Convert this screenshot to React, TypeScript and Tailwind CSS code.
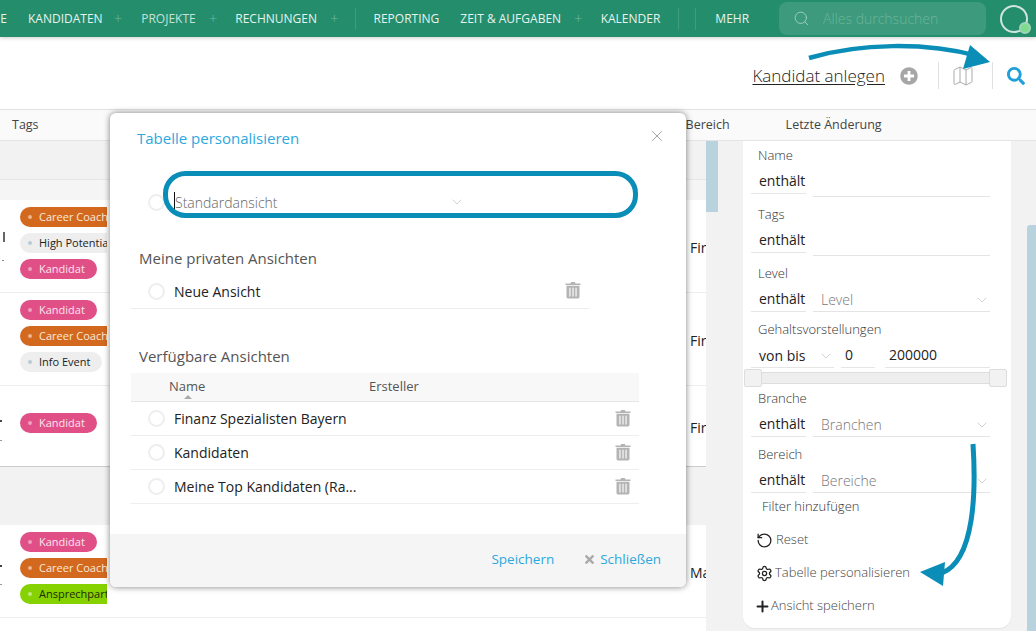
import React from "react";
import { FaPlusCircle, FaSearch, FaTimes } from "react-icons/fa";
import { Map, Plus, RotateCcw, Search, Settings, X, ChevronDown } from "lucide-react";

const NavPlus = ({ className = "" }: { className?: string }) => (
  <span className={`text-[#6fb89f] text-[15px] font-light leading-none ${className}`}>+</span>
);

const Trash = () => (
  <svg width="16" height="18" viewBox="0 0 16 18" fill="#b4b4b4" className="block">
    <path d="M0.5 2.6h5l.6-1.6h3.8l.6 1.6h5.000v1.300h-15.000z" />
    <path d="M1.500 4.800h13v11.200a1.400 1.400 0 0 1-1.400 1.400h-10.200a1.400 1.400 0 0 1-1.400-1.400z" />
    <path d="M4.400 6.800h1.100v8.600h-1.100zM7.450 6.800h1.100v8.600h-1.100zM10.500 6.800h1.100v8.600h-1.100z" fill="#fff" />
  </svg>
);

const Radio = () => <span className="block w-[17px] h-[17px] rounded-full border-2 border-[#eeeeee] bg-white shrink-0" />;

const Tag = ({ label, color }: { label: string; color: "orange" | "pink" | "gray" | "lime" }) => {
  const styles = {
    orange: "bg-[#d2691e] text-[#fbe9d9]",
    pink: "bg-[#e04f86] text-[#fde4ee]",
    gray: "bg-[#eeeeee] text-[#222222]",
    lime: "bg-[#86d100] text-[#1d2b00]",
  };
  const dots = {
    orange: "bg-[#eeb48c]",
    pink: "bg-[#eea0c0]",
    gray: "bg-[#b8ccd6]",
    lime: "bg-[#c0e880]",
  };
  return (
    <div className={`h-5 rounded-full flex items-center pl-[8px] pr-3 w-fit whitespace-nowrap text-[11px] ${styles[color]}`}>
      <span className={`w-[4px] h-[4px] rounded-full mr-[7px] shrink-0 ${dots[color]}`} />
      {label}
    </div>
  );
};

const TableRow = ({
  tags,
  cell,
  h,
  pt = "pt-[7px]",
  last,
  children,
}: {
  tags: React.ReactNode;
  cell: string;
  h: string;
  pt?: string;
  last?: boolean;
  children?: React.ReactNode;
}) => (
  <div className={`${h} flex relative border-b ${last ? "border-[#cccccc]" : "border-[#eeeeee]"}`}>
    {children}
    <div className={`w-[107px] pl-5 ${pt} flex flex-col gap-[6px] overflow-hidden shrink-0`}>{tags}</div>
    <div className="ml-[583px] self-center mt-[2px] w-4 overflow-hidden text-[14px] text-[#222222] whitespace-nowrap">{cell}</div>
  </div>
);

const FilterRow = ({ label, value, low, mb = "mb-[8px]" }: { label: string; value?: string; low?: boolean; mb?: string }) => (
  <div className={mb}>
    <div className="pl-[15px] text-[13px] font-light text-[#333333] leading-[18px]">{label}</div>
    <div className={`flex items-start mt-[6px] ${low ? "h-[27px]" : "h-[24px]"}`}>
      <div className="w-[55px] ml-[8px] border-b border-[#e6e6e6] h-[24px] pl-[8px] text-[14px] leading-[22px] text-[#222222]">enthält</div>
      <div className={`w-[177px] ml-[7px] border-b border-[#e4e4e4] flex items-center justify-between pl-2 text-[14px] font-light text-[#777777] ${low ? "h-[27px]" : "h-[24px]"}`}>
        {value}
        {value && <ChevronDown size={16} strokeWidth={0.8} className="text-[#aaaaaa]" />}
      </div>
    </div>
  </div>
);

const ViewRow = ({ name }: { name: string }) => (
  <div className="h-[34px] flex items-center border-b border-[#eeeeee]">
    <div className="ml-[17px] mr-[9px]">
      <Radio />
    </div>
    <span className="text-[14px] text-[#222222] flex-1">{name}</span>
    <div className="mr-2 mb-[2px]">
      <Trash />
    </div>
  </div>
);

export default function App() {
  return (
    <div className="w-[1036px] h-[631px] overflow-hidden relative bg-white" style={{ fontFamily: '"Open Sans", sans-serif' }}>
      {/* top nav */}
      <nav className="h-[37px] bg-[#248d6c] flex items-center text-[12px] text-[#e6f3ee] whitespace-nowrap relative z-10 shadow-[0_1px_4px_rgba(0,0,0,0.2)]">
        <span className="w-[7px] overflow-hidden flex justify-end">E</span>
        <span className="ml-[21px]">KANDIDATEN</span>
        <NavPlus className="ml-[11px]" />
        <span className="ml-[19px] text-[#c5e2d8]">PROJEKTE</span>
        <NavPlus className="ml-[13px]" />
        <span className="ml-[18px]">RECHNUNGEN</span>
        <NavPlus className="ml-[13px]" />
        <span className="ml-[16px] w-px h-[22px] bg-[#3f9c7e]" />
        <span className="ml-[18px]">REPORTING</span>
        <span className="ml-[21px]">ZEIT &amp; AUFGABEN</span>
        <NavPlus className="ml-[13px]" />
        <span className="ml-[18px]">KALENDER</span>
        <span className="ml-[18px] w-px h-[22px] bg-[#3f9c7e]" />
        <span className="ml-[16px] w-px h-[22px] bg-[#3f9c7e]" />
        <span className="ml-[19px]">MEHR</span>
        <div className="ml-[30px] w-[207px] h-[33px] rounded-lg bg-[#3d9a7c] flex items-center pl-[14px]">
          <Search size={17} strokeWidth={1.2} className="text-[#a9d4c4]" />
          <span className="ml-[13px] text-[14px] font-light text-[#6cb49b]">Alles durchsuchen</span>
        </div>
        <div className="ml-[14px] w-[28px] h-[28px] rounded-full border-2 border-[#cfe4dc] relative">
          <span className="absolute right-[-5px] bottom-[-3px] w-3 h-3 rounded-full bg-[#7fdc8c] border-2 border-[#9fd4b8]" />
        </div>
      </nav>

      {/* page actions */}
      <div className="h-[73px] pt-[5px] flex items-center justify-end border-b border-[#e2e2e2]">
        <span className="text-[17px] text-[#222222] underline underline-offset-2 font-light">Kandidat anlegen</span>
        <FaPlusCircle size={18} className="ml-[15px] text-[#a6a6a6]" />
        <span className="ml-[20px] w-px h-[27px] bg-[#e0e0e0]" />
        <Map size={24} strokeWidth={1} className="ml-[12px] text-[#aaaaaa]" />
        <span className="ml-[17px] w-px h-[27px] bg-[#e0e0e0]" />
        <FaSearch size={18} className="ml-[14px] mr-[11px] text-[#1f9fdc]" />
      </div>

      {/* table header */}
      <div className="h-[31px] flex items-center bg-[#fafafa] border-b border-[#e4e4e4] text-[12.5px] text-[#444444]">
        <span className="ml-3">Tags</span>
        <span className="ml-[647px]">Bereich</span>
        <span className="ml-[56px]">Letzte Änderung</span>
      </div>

      <div className="flex h-[490px]">
        {/* table */}
        <div className="w-[706px] shrink-0">
          <div className="h-[39px] bg-[#f2f2f2] border-b border-[#e6e6e6]" />
          <div className="h-[20px] bg-[#f5f5f5]" />
          <TableRow
            h="h-[93px]"
            cell="Fir"
            tags={
              <>
                <Tag label="Career Coach" color="orange" />
                <Tag label="High Potential" color="gray" />
                <Tag label="Kandidat" color="pink" />
              </>
            }
          >
            <span className="absolute left-[3px] top-[32px] w-[2px] h-[10px] bg-[#666666]" />
            <span className="absolute left-[2px] top-[60px] w-[2px] h-px bg-[#888888]" />
          </TableRow>
          <TableRow
            h="h-[93px]"
            cell="Fir"
            tags={
              <>
                <Tag label="Kandidat" color="pink" />
                <Tag label="Career Coach" color="orange" />
                <Tag label="Info Event" color="gray" />
              </>
            }
          />
          <TableRow h="h-[81px]" cell="Fir" pt="pt-[27px]" last tags={<Tag label="Kandidat" color="pink" />}>
            <span className="absolute left-0 top-[34px] w-[2px] h-[2px] bg-[#444444]" />
            <span className="absolute left-0 top-[54px] w-[2px] h-px bg-[#999999]" />
          </TableRow>
          <div className="h-[58px] bg-[#f2f2f2]" />
          <TableRow
            h="h-[93px]"
            cell="Ma"
            tags={
              <>
                <Tag label="Kandidat" color="pink" />
                <Tag label="Career Coach" color="orange" />
                <Tag label="Ansprechpartner" color="lime" />
              </>
            }
          >
            <span className="absolute left-0 top-[40px] w-[2px] h-[2px] bg-[#444444]" />
            <span className="absolute left-0 top-[59px] w-[2px] h-px bg-[#999999]" />
          </TableRow>
        </div>

        {/* filter side */}
        <div className="flex-1 bg-[#f2f2f2] flex relative">
          <div className="w-3 h-[71px] bg-[#b9d3de]" />
          <div className="w-[268px] h-[487px] ml-[25px] bg-white rounded-b-[12px] shadow-[0_1px_1px_rgba(0,0,0,0.06)] pt-[5px]">
            <FilterRow label="Name" low />
            <FilterRow label="Tags" low />
            <FilterRow label="Level" value="Level" />
            <div className="pl-[15px] text-[13px] font-light text-[#333333] leading-[18px]">Gehaltsvorstellungen</div>
            <div className="flex mt-[6px] h-[24px] text-[14px] text-[#222222] leading-[22px]">
              <div className="w-[83px] ml-[8px] border-b border-[#e6e6e6] pl-2 flex justify-between items-center">
                von bis
                <ChevronDown size={16} strokeWidth={0.8} className="text-[#aaaaaa]" />
              </div>
              <div className="w-[34px] ml-[7px] border-b border-[#e6e6e6] pl-1">0</div>
              <div className="w-[105px] ml-[10px] border-b border-[#e6e6e6] pl-1">200000</div>
            </div>
            <div className="relative ml-[1px] w-[263px] h-[18px] mt-[1px] mb-[2px] flex items-center">
              <div className="w-full h-[12px] bg-[#eeeeee] border border-[#dddddd]" />
              <span className="absolute left-0 top-0 w-[18px] h-[18px] bg-[#f2f2f2] border border-[#dddddd] rounded-[2px]" />
              <span className="absolute right-0 top-0 w-[18px] h-[18px] bg-[#f2f2f2] border border-[#dddddd] rounded-[2px]" />
            </div>
            <FilterRow label="Branche" value="Branchen" />
            <FilterRow label="Bereich" value="Bereiche" mb="mb-0" />
            <div className="pl-[19px] mt-[4px] text-[13px] font-light text-[#333333] leading-[18px]">Filter hinzufügen</div>
            <div className="flex items-center mt-[16px] pl-[13px] h-[18px] text-[13px] text-[#444444] font-light">
              <RotateCcw size={17} strokeWidth={1.8} className="text-[#222222] mr-[3px]" />
              Reset
            </div>
            <div className="flex items-center mt-[15px] pl-[13px] h-[18px] text-[13px] text-[#444444] font-light">
              <Settings size={17} strokeWidth={1.8} className="text-[#222222] mr-[2px]" />
              Tabelle personalisieren
            </div>
            <div className="flex items-center mt-[15px] pl-[11px] h-[18px] text-[13px] text-[#444444] font-light">
              <Plus size={17} strokeWidth={2.8} className="text-[#222222]" />
              Ansicht speichern
            </div>
          </div>
          <div className="absolute right-0 top-[84px] w-[9px] h-[406px] bg-[#b9d3de] rounded-tl-[3px]" />
        </div>
      </div>

      {/* modal */}
      <div className="absolute left-[110px] top-[113px] w-[576px] h-[474px] bg-white rounded-[6px] shadow-[0_0_6px_rgba(0,0,0,0.5)] z-20 flex flex-col overflow-hidden">
        <div className="flex items-start justify-between pl-[27px] pr-[20px] pt-[14px] text-[15px] leading-[22px] text-[#2ba9dd]">
          <span>Tabelle personalisieren</span>
          <X size={18} strokeWidth={1} className="text-[#888888]" />
        </div>
        <div className="flex items-center ml-[38px] mt-[42px] h-[22px]">
          <Radio />
          <span className="ml-[9px] w-[291px] flex justify-between items-center text-[14px] font-light text-[#666666]">
            <span className="border-l border-[#111111]">Standardansicht</span>
            <ChevronDown size={16} strokeWidth={0.8} className="text-[#aaaaaa]" />
          </span>
        </div>
        <div className="ml-[29px] mt-[34px] text-[15px] leading-[22px] text-[#555555]">Meine privaten Ansichten</div>
        <div className="ml-[21px] w-[458px] h-[37px] mt-[3px] pt-[2px] flex items-center border-b border-[#eeeeee]">
          <div className="ml-[17px] mr-[9px]">
            <Radio />
          </div>
          <span className="text-[14px] text-[#222222] flex-1">Neue Ansicht</span>
          <div className="mr-2 mb-[2px]">
            <Trash />
          </div>
        </div>
        <div className="ml-[29px] mt-[36px] text-[15px] leading-[22px] text-[#555555]">Verfügbare Ansichten</div>
        <div className="ml-[21px] w-[508px] mt-[6px]">
          <div className="h-[29px] bg-[#f8f8f8] border-b border-[#e6e6e6] flex items-center text-[13px] text-[#555555] relative">
            <span className="ml-[38px] w-[200px]">Name</span>
            <span>Ersteller</span>
            <span className="absolute left-[53px] bottom-[2px] w-0 h-0 border-l-[4px] border-r-[4px] border-b-[4px] border-l-transparent border-r-transparent border-b-[#aaaaaa]" />
          </div>
          <ViewRow name="Finanz Spezialisten Bayern" />
          <ViewRow name="Kandidaten" />
          <ViewRow name="Meine Top Kandidaten (Ra..." />
        </div>
        <div className="mt-auto h-[53px] pb-[2px] bg-[#f5f5f5] flex items-center justify-end pr-[25px] text-[13.5px] text-[#2ba9dd]">
          <span>Speichern</span>
          <FaTimes size={13} className="ml-[29px] mr-[4px] text-[#aaaaaa]" />
          <span>Schließen</span>
        </div>
      </div>

      {/* annotation arrows */}
      <svg className="absolute left-0 top-0 z-30 pointer-events-none" width="1036" height="631" fill="none">
        <rect x="165.500" y="173.500" width="470" height="42" rx="20" stroke="#0a8db6" strokeWidth="5" />
        <path d="M809 58C860 43 925 42 978 56" stroke="#0a8db6" strokeWidth="4.500" />
        <path d="M970 45L990 62L963 69Z" fill="#0a8db6" />
        <path d="M973 444C976 490 975 560 942 573" stroke="#0a8db6" strokeWidth="5" />
        <path d="M920 572L945 562L943 586Z" fill="#0a8db6" />
      </svg>
    </div>
  );
}
